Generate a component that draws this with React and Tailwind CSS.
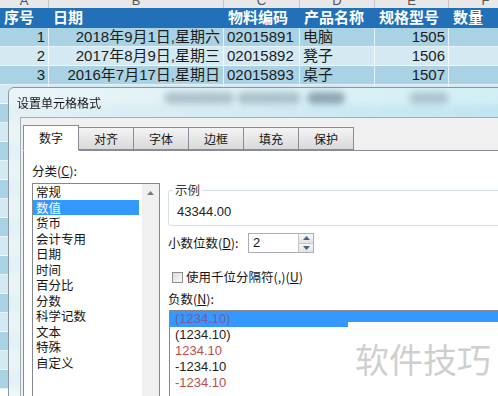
import React from 'react';

const letters = ['A', 'B', 'C', 'D', 'E', 'F'];
const headers = ['序号', '日期', '物料编码', '产品名称', '规格型号', '数量'];
const align = ['justify-end', 'justify-end', 'justify-start', 'justify-start', 'justify-end', 'justify-start'];

const sheetRows = [
  ['1', '2018年9月1日,星期六', '02015891', '电脑', '1505', ''],
  ['2', '2017年8月9日,星期三', '02015892', '凳子', '1506', ''],
  ['3', '2016年7月17日,星期日', '02015893', '桌子', '1507', ''],
];
// rows hidden behind the dialog, only their colours show through the glass
const hiddenRows = 16;

const categories = ['常规', '数值', '货币', '会计专用', '日期', '时间', '百分比', '分数', '科学记数', '文本', '特殊', '自定义'];

const negatives = [
  { text: '(1234.10)', red: true },
  { text: '(1234.10)', red: false },
  { text: '1234.10', red: true },
  { text: '-1234.10', red: false },
  { text: '-1234.10', red: true },
];

const tabs = ['数字', '对齐', '字体', '边框', '填充', '保护'];

function Arrow({ up }) {
  return (
    <svg width="7" height="4" viewBox="0 0 7 4">
      {up ? <polygon points="0,4 3.5,0 7,4" fill="#4d6185" /> : <polygon points="0,0 3.5,4 7,0" fill="#4d6185" />}
    </svg>
  );
}

function Sheet() {
  const blank = Array.from({ length: hiddenRows }, (_, i) => i + 3);
  return (
    <div className="grid grid-cols-[49px_175px_76px_75px_74px_74px] font-['Liberation_Sans','Noto_Sans_CJK_SC',sans-serif]">
      {letters.map((l) => (
        <div key={l} className="h-[8px] flex items-end justify-center overflow-hidden bg-[#e8e8e8] border-r border-[#c6c6c6] text-[13px] leading-[14px] text-[#555]">
          {l}
        </div>
      ))}
      {headers.map((h) => (
        <div key={h} className="h-[20px] flex items-center pl-[4px] bg-[#2170b8] text-white font-bold text-[15px] whitespace-nowrap overflow-hidden">
          {h}
        </div>
      ))}
      {sheetRows.map((row, i) =>
        row.map((cell, j) => (
          <div
            key={i + '-' + j}
            className={
              'h-[19px] flex items-center px-[3px] border-r border-b border-white/70 text-[15px] text-[#1c1c1c] whitespace-nowrap overflow-hidden ' +
              align[j] +
              (i % 2 === 0 ? ' bg-[#a9d2e4]' : ' bg-[#d5e9f2]')
            }
          >
            {cell}
          </div>
        ))
      )}
      {blank.map((i) =>
        letters.map((l) => (
          <div
            key={i + l}
            className={'h-[19px] border-r border-b border-white/70 ' + (i % 2 === 0 ? 'bg-[#a9d2e4]' : 'bg-[#d5e9f2]')}
          />
        ))
      )}
    </div>
  );
}

function Dialog() {
  return (
    <div className="absolute left-[8px] top-[87px] w-[520px] h-[330px] rounded-tl-[6px] border border-[#8a98a3] bg-gradient-to-r from-[#eef6f8]/85 to-[#cdf1f8]/60 backdrop-blur-[3px] font-['Noto_Sans_CJK_SC',sans-serif] text-[#151515]">
      <div className="relative h-[29px] flex items-center pl-[8px] text-[12px]">
        <div className="absolute left-[155px] top-[4px] w-[70px] h-[12px] rounded-full bg-[#6f8a99]/45 blur-[3px]" />
        <div className="absolute left-[228px] top-[4px] w-[64px] h-[12px] rounded-full bg-[#6f8a99]/45 blur-[3px]" />
        <div className="absolute left-[298px] top-[4px] w-[38px] h-[12px] rounded-full bg-[#4f6a7c]/55 blur-[3px]" />
        <div className="absolute left-[400px] top-[4px] w-[40px] h-[12px] rounded-full bg-[#6f8a99]/40 blur-[3px]" />
        <span className="relative">设置单元格格式</span>
      </div>
      <div className="ml-[11px] h-full border-l border-t border-[#a3aeb6] bg-[#f0f0f0] pl-[2px] pt-[9px]">
        <div className="flex items-end h-[23px]">
          {tabs.map((t, i) =>
            i === 0 ? (
              <div key={t} className="relative z-10 -mb-px w-[56px] h-[26px] flex items-center justify-center border border-[#898c95] border-b-white bg-white text-[12px]">
                {t}
              </div>
            ) : (
              <div key={t} className="-ml-px w-[56px] h-[23px] flex items-center justify-center border border-[#898c95] bg-gradient-to-b from-[#f4f4f4] to-[#d9d9d9] text-[12px]">
                {t}
              </div>
            )
          )}
        </div>
        <div className="w-[490px] h-[260px] border border-[#898c95] bg-white flex pl-[8px] pt-[12px]">
          <div className="w-[128px] flex flex-col">
            <div className="h-[16px] leading-[16px] text-[12.5px]">
              分类(<span className="underline">C</span>):
            </div>
            <div className="mt-[4px] h-[230px] border border-[#828790] flex">
              <div className="flex-1 pr-[3px] flex flex-col">
                {categories.map((c, i) => (
                  <div
                    key={c}
                    className={'h-[15.5px] leading-[15.5px] pl-[3px] text-[12.5px] whitespace-nowrap ' + (i === 1 ? 'bg-[#3399ff] text-white' : '')}
                  >
                    {c}
                  </div>
                ))}
              </div>
              <div className="w-[17px] bg-[#f0f0f0] flex flex-col items-center">
                <div className="h-[18px] flex items-center justify-center">
                  <svg width="7" height="4" viewBox="0 0 7 4">
                    <polygon points="0,4 3.5,0 7,4" fill="#7a7a7a" />
                  </svg>
                </div>
              </div>
            </div>
          </div>

          <div className="ml-[8px] w-[340px] flex flex-col text-[12.5px]">
            <fieldset className="mt-[19px] border border-[#d5dfe5] rounded-[3px] pl-[4px] pb-[5px]">
              <legend className="px-[2px] leading-[16px] text-[#3a3a3a]">示例</legend>
              <div className="mt-[6px] pl-[4px] leading-[16px] text-[13px] font-['Liberation_Sans',sans-serif] text-[#222]">43344.00</div>
            </fieldset>

            <div className="mt-[7px] h-[20px] flex items-center">
              <div className="w-[80px] whitespace-nowrap">
                小数位数(<span className="underline">D</span>):
              </div>
              <div className="w-[66px] h-[20px] border border-[#abadb3] bg-white flex">
                <div className="flex-1 pl-[4px] leading-[18px] text-[13px] font-['Liberation_Sans',sans-serif]">2</div>
                <div className="w-[15px] flex flex-col border-l border-[#c4c4c4]">
                  <div className="flex-1 flex items-center justify-center bg-gradient-to-b from-[#f7f7f7] to-[#e3e3e3] border-b border-[#c4c4c4]">
                    <Arrow up />
                  </div>
                  <div className="flex-1 flex items-center justify-center bg-gradient-to-b from-[#f7f7f7] to-[#e3e3e3]">
                    <Arrow />
                  </div>
                </div>
              </div>
            </div>

            <div className="mt-[16px] h-[16px] flex items-center">
              <div className="ml-[4px] w-[11px] h-[11px] border border-[#8f8f8f] bg-gradient-to-br from-[#dcdcdc] to-[#fbfbfb]" />
              <div className="ml-[3px] leading-[16px] whitespace-nowrap">
                使用千位分隔符(,)(<span className="underline">U</span>)
              </div>
            </div>

            <div className="mt-[6px] h-[16px] leading-[16px]">
              负数(<span className="underline">N</span>):
            </div>

            <div className="mt-[3px] ml-[1px] h-[100px] border border-[#828790] flex flex-col font-['Liberation_Sans',sans-serif] text-[13px]">
              {negatives.map((n, i) => (
                <div
                  key={i}
                  className={
                    'h-[16px] leading-[16px] pl-[5px] ' +
                    (i === 0 ? 'bg-[#3399ff] text-[#7a5c9c]' : n.red ? 'text-[#b8504a]' : 'text-[#1c1c1c]')
                  }
                >
                  {n.text}
                </div>
              ))}
            </div>
          </div>
        </div>
      </div>
    </div>
  );
}

export default function App() {
  return (
    <div className="relative w-[498px] h-[396px] overflow-hidden bg-white">
      <Sheet />
      <Dialog />
      <div className="absolute left-[348px] top-[322px] w-[150px] h-[74px] bg-white pl-[7px] text-[34px] leading-[74px] text-[#cfcfcf] whitespace-nowrap font-['Noto_Sans_CJK_SC',sans-serif]">
        软件技巧
      </div>
    </div>
  );
}
